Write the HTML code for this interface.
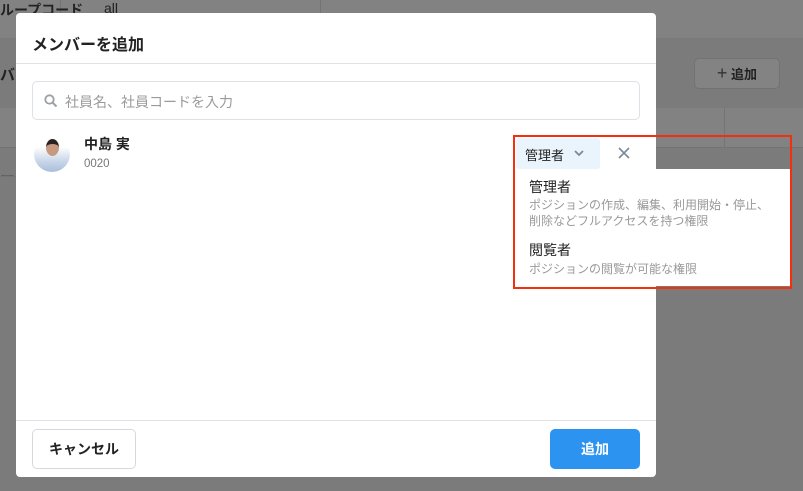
<!DOCTYPE html>
<html><head><meta charset="utf-8"><style>
*{box-sizing:border-box;margin:0;padding:0}
body{width:803px;height:491px;overflow:hidden;background:#7b7b7b;font-family:"Liberation Sans","Noto Sans CJK JP",sans-serif;position:relative}
.a{position:absolute}
</style></head><body>
<div class="a" style="left:0;top:0;width:803px;height:38px;background:#828282"></div>
<div class="a" style="left:60px;top:0;width:1px;height:38px;background:#747474"></div>
<div class="a" style="left:320px;top:0;width:1px;height:38px;background:#747474"></div>
<div class="a" style="left:0;top:0;font-size:14px;color:#222;font-weight:bold">ループコード</div>
<div class="a" style="left:104px;top:0;font-size:14px;color:#222">all</div>
<div class="a" style="left:0;top:64px;font-size:15px;color:#222;font-weight:bold">バー</div>
<div class="a" style="left:0;top:166px;font-size:15px;color:#222">ー</div>
<div class="a" style="left:0;top:108px;width:803px;height:40px;background:#828282;border-bottom:1px solid #747474"></div>
<div class="a" style="left:724px;top:108px;width:1px;height:40px;background:#747474"></div>
<div class="a" style="left:0;top:176px;width:16px;height:1px;background:#747474"></div>
<div class="a" style="left:694px;top:58px;width:86px;height:31px;background:#838383;border:1px solid #727272;border-radius:5px;font-size:13px;font-weight:bold;color:#222;line-height:29px;text-align:center"><span style="font-size:18px;font-weight:normal;color:#333">+</span> 追加</div>

<div class="a" style="left:16px;top:13px;width:640px;height:464px;background:#fff;border-radius:4px">
  <div class="a" style="left:16px;top:18px;font-size:16px;font-weight:bold;color:#222">メンバーを追加</div>
  <div class="a" style="left:0;top:50px;width:640px;height:1px;background:#dfe3e8"></div>
  <div class="a" style="left:16px;top:68px;width:608px;height:39px;border:1px solid #dde1e6;border-radius:5px"></div>
  <svg class="a" style="left:28px;top:81px" width="14" height="14" viewBox="0 0 14 14"><circle cx="5.5" cy="5.5" r="4.2" fill="none" stroke="#9aa0a6" stroke-width="1.8"/><path d="M8.6 8.6L12.5 12.5" stroke="#9aa0a6" stroke-width="2"/></svg>
  <div class="a" style="left:49px;top:79px;font-size:14px;color:#9a9a9a">社員名、社員コードを入力</div>
  <div class="a" style="left:18px;top:123px;width:36px;height:36px;border-radius:50%;background:linear-gradient(#fff 0,#fff 30%,#c8d6e8 70%,#aabedb 100%);overflow:hidden">
    <div class="a" style="left:12px;top:3px;width:13px;height:17px;border-radius:50%;background:#c59a80;border-top:5px solid #2a2220"></div>
  </div>
  <div class="a" style="left:68px;top:121px;font-size:14px;font-weight:bold;color:#222">中島 実</div>
  <div class="a" style="left:68px;top:145px;font-size:11.5px;color:#777">0020</div>
  <div class="a" style="left:0;top:407px;width:640px;height:1px;background:#dfe3e8"></div>
  <div class="a" style="left:16px;top:416px;width:104px;height:40px;border:1px solid #d5d9de;border-radius:5px;font-size:14px;font-weight:bold;color:#222;text-align:center;line-height:38px">キャンセル</div>
  <div class="a" style="left:534px;top:416px;width:90px;height:40px;background:#2d93f0;border-radius:5px;font-size:14px;font-weight:bold;color:#fff;text-align:center;line-height:40px">追加</div>
</div>

<div class="a" style="left:516px;top:138px;width:84px;height:31px;background:#eaf4fd;border-radius:3px"></div>
<div class="a" style="left:525px;top:145px;font-size:13px;color:#222">管理者</div>
<svg class="a" style="left:573px;top:148px" width="12" height="10" viewBox="0 0 12 10"><path d="M2 3L6 7L10 3" fill="none" stroke="#7b8a9a" stroke-width="1.8"/></svg>
<svg class="a" style="left:617px;top:146px" width="14" height="14" viewBox="0 0 14 14"><path d="M2 2L12 12M12 2L2 12" stroke="#7b8a9a" stroke-width="1.6"/></svg>
<div class="a" style="left:516px;top:169px;width:276px;height:117px;background:#fff;border-radius:3px">
  <div class="a" style="left:13px;top:8px;font-size:14px;color:#222">管理者</div>
  <div class="a" style="left:13px;top:28px;font-size:12px;line-height:16px;color:#999;width:262px;white-space:nowrap">ポジションの作成、編集、利用開始・停止、<br>削除などフルアクセスを持つ権限</div>
  <div class="a" style="left:13px;top:71px;font-size:14px;color:#222">閲覧者</div>
  <div class="a" style="left:13px;top:91px;font-size:12px;color:#999">ポジションの閲覧が可能な権限</div>
</div>
<div class="a" style="left:513px;top:135px;width:279px;height:154px;border:2.5px solid #f2300f"></div>
</body></html>
